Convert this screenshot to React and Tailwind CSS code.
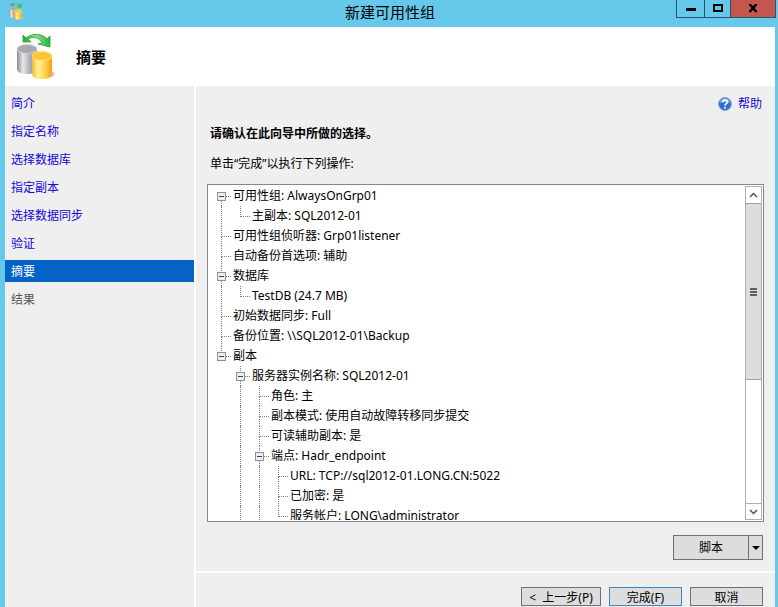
import React from "react";

const steps = [
  { label: "简介", state: "link" },
  { label: "指定名称", state: "link" },
  { label: "选择数据库", state: "link" },
  { label: "指定副本", state: "link" },
  { label: "选择数据同步", state: "link" },
  { label: "验证", state: "link" },
  { label: "摘要", state: "current" },
  { label: "结果", state: "pending" },
];

const tree = [
  { label: "可用性组: AlwaysOnGrp01", children: [{ label: "主副本: SQL2012-01" }] },
  { label: "可用性组侦听器: Grp01listener" },
  { label: "自动备份首选项: 辅助" },
  { label: "数据库", children: [{ label: "TestDB (24.7 MB)" }] },
  { label: "初始数据同步: Full" },
  { label: "备份位置: \\\\SQL2012-01\\Backup" },
  {
    label: "副本",
    children: [
      {
        label: "服务器实例名称: SQL2012-01",
        more: true,
        children: [
          { label: "角色: 主" },
          { label: "副本模式: 使用自动故障转移同步提交" },
          { label: "可读辅助副本: 是" },
          {
            label: "端点: Hadr_endpoint",
            more: true,
            children: [
              { label: "URL: TCP://sql2012-01.LONG.CN:5022" },
              { label: "已加密: 是" },
              { label: "服务帐户: LONG\\administrator" },
            ],
          },
        ],
      },
    ],
  },
];

function DatabaseIcon({ className }) {
  return (
    <svg viewBox="0 0 40 46" className={className} aria-hidden="true">
      <defs>
        <linearGradient id="silver" x1="0" x2="1">
          <stop offset="0" stopColor="#8b8b8f" />
          <stop offset="0.3" stopColor="#e9e9ec" />
          <stop offset="0.6" stopColor="#b4b4b8" />
          <stop offset="1" stopColor="#858589" />
        </linearGradient>
        <linearGradient id="gold" x1="0" x2="1">
          <stop offset="0" stopColor="#f5b92c" />
          <stop offset="0.3" stopColor="#fff0a0" />
          <stop offset="0.65" stopColor="#ffd348" />
          <stop offset="1" stopColor="#eda11c" />
        </linearGradient>
        <linearGradient id="leaf" x1="0" x2="1">
          <stop offset="0" stopColor="#22a535" />
          <stop offset="0.5" stopColor="#8be184" />
          <stop offset="1" stopColor="#27b43b" />
        </linearGradient>
      </defs>
      <ellipse cx="30" cy="40" rx="9" ry="4" fill="#d9cdb4" />
      <path d="M1 15v20c0 3 4 5 10 5s10-2 10-5V15z" fill="url(#silver)" />
      <ellipse cx="11" cy="15" rx="10" ry="4.500" fill="#a9a9ad" stroke="#d4d4d8" />
      <path d="M16 22v18c0 3 4 5 10 5s10-2 10-5V22z" fill="url(#gold)" />
      <ellipse cx="26" cy="22" rx="10" ry="4.500" fill="#ffc52d" stroke="#ffe68a" />
      <path d="M7 1v7h8l-3-3c6-3 12-1 14 4l-4 1 12 3V2l-3 3C26-1 16-1 10 4z" fill="url(#leaf)" stroke="#27a537" strokeWidth="0.800" />
    </svg>
  );
}

function WindowControls() {
  return (
    <div className="flex h-[18px] border border-t-0 border-[#29526b]">
      <button aria-label="最小化" className="flex w-[27px] items-center justify-center">
        <svg width="10" height="10" aria-hidden="true"><path d="M0 4h10v3H0z" /></svg>
      </button>
      <button aria-label="最大化" className="flex w-[26px] items-center justify-center border-l border-[#29526b]">
        <svg width="10" height="10" aria-hidden="true"><path d="M1 1h8v6H1z" fill="none" stroke="#000" strokeWidth="2" /></svg>
      </button>
      <button aria-label="关闭" className="flex w-[45px] items-center justify-center border-l border-[#29526b] bg-[#c4564e]">
        <svg width="10" height="10" aria-hidden="true"><path d="M1.500 0l7 8M8.500 0l-7 8" stroke="#000" strokeWidth="2.400" /></svg>
      </button>
    </div>
  );
}

function Branch({ node, last, expandable }) {
  const continues = !last || node.more;
  return (
    <span className="grid h-5 w-[19px] shrink-0 grid-cols-[9px_10px] grid-rows-[11px_9px]">
      <span className={"col-start-2 row-start-1 border-b border-dotted border-[#808080] " + (node.first ? "" : "border-l")} />
      {continues && <span className="col-start-2 row-start-2 border-l border-dotted border-[#808080]" />}
      {expandable && (
        <button
          aria-label={"折叠 " + node.label}
          className="col-span-2 col-start-1 row-span-2 row-start-1 ml-[5px] mt-1.5 flex h-[9px] w-[9px] items-center justify-center border border-[#919191] bg-[#eeeeee]"
        >
          <span className="h-px w-[5px] bg-[#404060]" />
        </button>
      )}
    </span>
  );
}

function TreeItems({ nodes, guides }) {
  return nodes.map((node, i) => {
    const last = i === nodes.length - 1;
    const root = guides.length === 0;
    return (
      <li key={node.label}>
        <div className="flex h-5 items-center">
          {guides.map((open, g) => (
            <span key={g} className="flex h-5 w-[19px] shrink-0 pl-[9px]">
              {open && <span className="border-l border-dotted border-[#808080]" />}
            </span>
          ))}
          <Branch node={{ ...node, first: root && i === 0 }} last={last} expandable={!!node.children} />
          <span className="whitespace-nowrap pl-0.5">{node.label}</span>
        </div>
        {node.children && (
          <ul>
            <TreeItems nodes={node.children} guides={[...guides, !last || !!node.more]} />
          </ul>
        )}
      </li>
    );
  });
}

function ScrollBar() {
  return (
    <div className="my-px mr-px flex w-[17px] shrink-0 flex-col border border-[#b0b0b0] bg-white">
      <button aria-label="向上滚动" className="flex h-4 shrink-0 items-center justify-center">
        <svg width="9" height="6" aria-hidden="true"><path d="M1 5l3.500-3.500L8 5" fill="none" stroke="#505050" strokeWidth="1.500" /></svg>
      </button>
      <div className="min-h-0 flex-1">
        <div className="flex h-[59%] flex-col items-center justify-center gap-px border-y border-[#a0a0a0] bg-[#dddddd]">
          <span className="h-0.5 w-[7px] bg-[#606060]" />
          <span className="h-0.5 w-[7px] bg-[#606060]" />
          <span className="h-0.5 w-[7px] bg-[#606060]" />
        </div>
      </div>
      <button aria-label="向下滚动" className="flex h-4 shrink-0 items-center justify-center border-t border-[#b0b0b0]">
        <svg width="9" height="6" aria-hidden="true"><path d="M1 1l3.500 3.500L8 1" fill="none" stroke="#505050" strokeWidth="1.500" /></svg>
      </button>
    </div>
  );
}

function FooterButton({ wide, primary, children }) {
  return (
    <button
      className={
        "h-[19px] border bg-[#dddddd] " +
        (wide ? "w-20 " : "w-[73px] ") +
        (primary ? "border-[#3c86c8]" : "border-[#707070]")
      }
    >
      <span className="block h-[17px] overflow-hidden whitespace-pre leading-5">{children}</span>
    </button>
  );
}

export default function App() {
  return (
    <div className="flex h-screen flex-col overflow-hidden bg-[#66c8ea] pl-[5px] pr-[3px] font-['Noto_Sans','Noto_Sans_CJK_SC',sans-serif] text-[12px] leading-5 text-black">
      <header className="grid h-[27px] shrink-0 grid-cols-[1fr_auto_1fr] items-start">
        <DatabaseIcon className="ml-[3px] mt-[3px] h-[17px] w-4" />
        <h1 className="text-[15px] leading-6">新建可用性组</h1>
        <div className="-mr-px flex justify-end"><WindowControls /></div>
      </header>

      <div className="flex h-[59px] shrink-0 items-center gap-5 bg-white pl-[11px]">
        <DatabaseIcon className="h-[46px] w-10" />
        <h2 className="text-[15px] font-bold">摘要</h2>
      </div>

      <div className="flex min-h-0 flex-1 bg-[#efefef]">
        <nav className="w-[191px] shrink-0 border-r-2 border-white pt-1.5">
          <ul className="flex flex-col gap-1.5">
            {steps.map((s) => (
              <li key={s.label} className={"h-[22px] pl-1.5 leading-6 " + (s.state === "current" ? "bg-[#0563c8] text-white" : "")}>
                {s.state === "link" && <a href="#" className="text-[#1507d8]">{s.label}</a>}
                {s.state === "current" && <span aria-current="step">{s.label}</span>}
                {s.state === "pending" && <span className="text-[#555555]">{s.label}</span>}
              </li>
            ))}
          </ul>
        </nav>

        <main className="flex min-w-0 flex-1 flex-col">
          <div className="flex min-h-0 flex-1 flex-col px-[11px] pb-[11px] pt-2">
            <a href="#" className="flex items-center gap-1.5 self-end pr-0.5 text-[#1507d8]">
              <svg width="14" height="14" viewBox="0 0 14 14" aria-hidden="true">
                <circle cx="7" cy="7" r="6.500" fill="#2f6fd0" stroke="#8fa9cf" />
                <path d="M2 6a5 4.500 0 0 1 10 0c-3-1.500-7-1.500-10 0z" fill="#86b4ee" />
                <path d="M4.800 5.300c0-3 4.500-3 4.500-.4C9.300 6.500 7 6.600 7 8.500" fill="none" stroke="#fff" strokeWidth="1.600" />
                <circle cx="7" cy="10.700" r="1" fill="#fff" />
              </svg>
              帮助
            </a>
            <h3 className="mt-2.5 pl-[3px] font-bold">请确认在此向导中所做的选择。</h3>
            <p className="mt-2.5 pl-[3px]">单击“完成”以执行下列操作:</p>
            <section aria-label="摘要" className="mt-2.5 flex min-h-0 flex-1 border border-[#828790] bg-white">
              <ul className="mb-px mt-px min-w-0 flex-1 overflow-hidden pl-1">
                <TreeItems nodes={tree} guides={[]} />
              </ul>
              <ScrollBar />
            </section>
            <div className="mr-px mt-[13px] flex h-[25px] shrink-0 self-end border border-[#707070] bg-[#dddddd]">
              <button className="w-[74px]">脚本</button>
              <button aria-label="脚本选项" className="flex w-3.5 items-center justify-center border-l border-[#707070]">
                <svg width="8" height="4" aria-hidden="true"><path d="M0 0h8L4 4z" /></svg>
              </button>
            </div>
          </div>
          <footer className="flex h-9 shrink-0 justify-end gap-2 border-t-2 border-white pr-3 pt-[14px]">
            <FooterButton wide>{"<  上一步(P)"}</FooterButton>
            <FooterButton primary>完成(F)</FooterButton>
            <FooterButton>取消</FooterButton>
          </footer>
        </main>
      </div>
    </div>
  );
}
